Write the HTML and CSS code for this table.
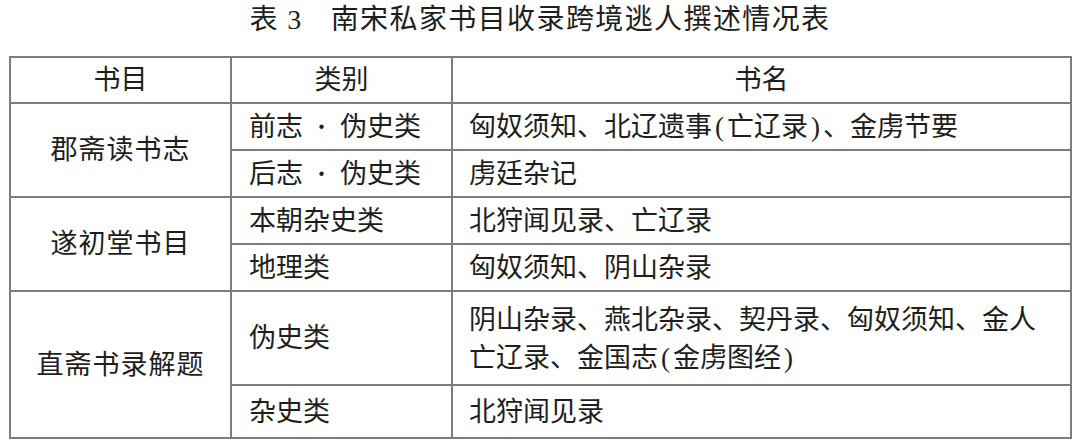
FILE: index.html
```html
<!DOCTYPE html>
<html lang="zh-CN">
<head>
<meta charset="utf-8">
<title>表3 南宋私家书目收录跨境逃人撰述情况表</title>
<link rel="stylesheet" href="styles.css">
</head>
<body>
<div class="page">
  <h1 class="title"><span class="tno">表 3</span><span class="tname">南宋私家书目收录跨境逃人撰述情况表</span></h1>
  <table class="tbl">
    <colgroup>
      <col class="c1">
      <col class="c2">
      <col class="c3">
    </colgroup>
    <thead>
      <tr class="r-head">
        <th>书目</th>
        <th>类别</th>
        <th>书名</th>
      </tr>
    </thead>
    <tbody>
      <tr class="r">
        <td class="cat" rowspan="2">郡斋读书志</td>
        <td class="kind">前志<span class="dot">·</span>伪史类</td>
        <td class="names">匈奴须知、北辽遗事<span class="p">(</span>亡辽录<span class="p">)</span>、金虏节要</td>
      </tr>
      <tr class="r">
        <td class="kind">后志<span class="dot">·</span>伪史类</td>
        <td class="names">虏廷杂记</td>
      </tr>
      <tr class="r">
        <td class="cat" rowspan="2">遂初堂书目</td>
        <td class="kind">本朝杂史类</td>
        <td class="names">北狩闻见录、亡辽录</td>
      </tr>
      <tr class="r">
        <td class="kind">地理类</td>
        <td class="names">匈奴须知、阴山杂录</td>
      </tr>
      <tr class="r-double">
        <td class="cat" rowspan="2">直斋书录解题</td>
        <td class="kind">伪史类</td>
        <td class="names">阴山杂录、燕北杂录、契丹录、匈奴须知、金人<br>亡辽录、金国志<span class="p">(</span>金虏图经<span class="p">)</span></td>
      </tr>
      <tr class="r-last">
        <td class="kind">杂史类</td>
        <td class="names">北狩闻见录</td>
      </tr>
    </tbody>
  </table>
</div>
</body>
</html>
```

FILE: styles.css
```css
html, body {
  margin: 0;
  padding: 0;
  background: #ffffff;
}

body {
  font-family: "Liberation Serif", "Noto Sans CJK SC", serif;
  color: #1e1e1e;
}

.page {
  width: 1080px;
  height: 446px;
  overflow: hidden;
  padding-top: 4px;
  box-sizing: border-box;
}

.title {
  margin: 0;
  height: 32px;
  line-height: 32px;
  text-align: center;
  font-size: 28px;
  font-weight: normal;
  letter-spacing: 1.4px;
  padding-left: 0;
}

.tno {
  margin-right: 28px;
}

.tbl {
  margin: 20px 0 0 9px;
  width: 1061px;
  border-collapse: collapse;
  table-layout: fixed;
  font-size: 27px;
}

.c1 { width: 221px; }
.c2 { width: 221px; }
.c3 { width: 619px; }

.tbl th,
.tbl td {
  border: 2px solid #7d7d7d;
  padding: 0;
  font-weight: normal;
  vertical-align: middle;
  line-height: 38px;
}

.tbl th {
  text-align: center;
}

.r-head { height: 46px; }
.r { height: 47px; }
.r-double { height: 94px; }
.r-last { height: 53px; }

.cat {
  text-align: center;
  letter-spacing: 1px;
}

.kind {
  text-align: left;
  padding-left: 17px !important;
  white-space: nowrap;
}

.names {
  text-align: left;
  padding-left: 16px !important;
  white-space: nowrap;
}

.dot {
  display: inline-block;
  width: 37px;
  text-align: center;
  font-weight: bold;
}

.r-double .names {
  padding-top: 2px !important;
}

.p {
  font-family: "Liberation Serif", serif;
  padding: 0 3px;
}
```
